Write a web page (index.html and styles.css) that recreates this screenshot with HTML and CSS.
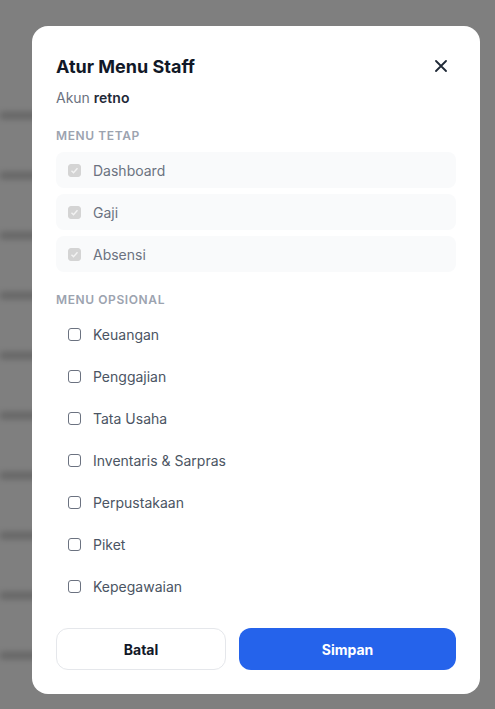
FILE: index.html
```html
<!DOCTYPE html>
<html lang="id">
<head>
    <meta charset="UTF-8">
    <meta name="viewport" content="width=device-width, initial-scale=1.0">
    <title>Atur Menu Staff</title>
    <link rel="stylesheet" href="styles.css">
</head>
<body>

    <!-- Staff table behind the dialog (blurred) -->
    <div class="page">
        <div class="page-row"><span class="cell"></span></div>
        <div class="page-row"><span class="cell"></span></div>
        <div class="page-row"><span class="cell"></span></div>
        <div class="page-row"><span class="cell"></span></div>
        <div class="page-row"><span class="cell"></span></div>
        <div class="page-row"><span class="cell"></span></div>
        <div class="page-row"><span class="cell"></span></div>
        <div class="page-row"><span class="cell"></span></div>
        <div class="page-row"><span class="cell"></span></div>
        <div class="page-row"><span class="cell"></span></div>
    </div>

    <!-- Dialog -->
    <div class="overlay">
        <div class="modal">
            <div class="modal-header">
                <h2 class="modal-title">Atur Menu Staff</h2>
                <button class="close-btn" aria-label="Tutup">
                    <svg width="12" height="12" viewBox="0 0 12 12" fill="none">
                        <path d="M1 1L11 11M11 1L1 11" stroke="#1f2937" stroke-width="1.8" stroke-linecap="round"/>
                    </svg>
                </button>
            </div>
            <p class="account">Akun <strong>retno</strong></p>

            <div class="section-label">Menu Tetap</div>
            <div class="menu-list">
                <label class="menu-item fixed"><input type="checkbox" checked disabled> Dashboard</label>
                <label class="menu-item fixed"><input type="checkbox" checked disabled> Gaji</label>
                <label class="menu-item fixed"><input type="checkbox" checked disabled> Absensi</label>
            </div>

            <div class="section-label">Menu Opsional</div>
            <div class="menu-list">
                <label class="menu-item"><input type="checkbox"> Keuangan</label>
                <label class="menu-item"><input type="checkbox"> Penggajian</label>
                <label class="menu-item"><input type="checkbox"> Tata Usaha</label>
                <label class="menu-item"><input type="checkbox"> Inventaris &amp; Sarpras</label>
                <label class="menu-item"><input type="checkbox"> Perpustakaan</label>
                <label class="menu-item"><input type="checkbox"> Piket</label>
                <label class="menu-item"><input type="checkbox"> Kepegawaian</label>
            </div>

            <div class="modal-actions">
                <button class="btn btn-cancel">Batal</button>
                <button class="btn btn-save">Simpan</button>
            </div>
        </div>
    </div>

</body>
</html>
```

FILE: styles.css
```css
/* Base */
body {
    margin: 0;
    font-family: 'Inter', 'Noto Sans', sans-serif;
    background: #ffffff;
    overflow: hidden;
    height: 100vh;
}

/* Page behind the dialog */
.page {
    padding-top: 112px;
    filter: blur(3px);
}

.page-row {
    height: 60px;
}

.cell {
    display: block;
    width: 120px;
    height: 7px;
    background: #c8c8c8;
}

/* Dim layer */
.overlay {
    position: fixed;
    inset: 0;
    background: rgba(0, 0, 0, 0.5);
    display: flex;
    align-items: flex-start;
    padding: 26px 15px 0 32px;
}

.modal {
    width: 448px;
    box-sizing: border-box;
    background: #ffffff;
    border-radius: 16px;
    padding: 24px;
}

.modal-header {
    display: flex;
    align-items: center;
    justify-content: space-between;
    height: 32px;
}

.modal-title {
    margin: 0;
    font-size: 18px;
    font-weight: 700;
    color: #111827;
}

.close-btn {
    width: 32px;
    height: 32px;
    margin-right: -1px;
    border: none;
    background: none;
    display: flex;
    align-items: center;
    justify-content: center;
    padding: 0;
    cursor: pointer;
}

.account {
    margin: 6px 0 0;
    font-size: 14px;
    line-height: 20px;
    color: #6b7280;
}

.account strong {
    font-weight: 600;
    color: #1f2937;
}

.section-label {
    margin-top: 20px;
    font-size: 12px;
    line-height: 16px;
    font-weight: 600;
    letter-spacing: 0.05em;
    text-transform: uppercase;
    color: #9ca3af;
}

.menu-list {
    margin-top: 8px;
    display: flex;
    flex-direction: column;
    gap: 6px;
}

.menu-item {
    display: flex;
    align-items: center;
    gap: 12px;
    height: 36px;
    padding: 0 12px;
    border-radius: 8px;
    font-size: 14px;
    color: #4b5563;
    cursor: pointer;
}

.menu-item.fixed {
    background: #f9fafb;
    color: #6b7280;
    cursor: default;
}

/* Checkboxes */
.menu-item input {
    appearance: none;
    width: 13px;
    height: 13px;
    margin: 0;
    border: 1px solid #6b7280;
    border-radius: 3px;
    background: #ffffff;
    flex-shrink: 0;
}

.menu-item input:checked:disabled {
    border-color: #d4d4d4;
    background: #d4d4d4 url("data:image/svg+xml,%3Csvg xmlns='http://www.w3.org/2000/svg' viewBox='0 0 13 13'%3E%3Cpath d='M3.5 6.8l2 2 4-4.6' fill='none' stroke='%23f3f3f3' stroke-width='1.4'/%3E%3C/svg%3E") no-repeat center / 13px 13px;
}

/* Footer buttons */
.modal-actions {
    margin-top: 24px;
    display: flex;
    gap: 13px;
}

.btn {
    height: 42px;
    border-radius: 12px;
    font-family: inherit;
    font-size: 14px;
    font-weight: 700;
    cursor: pointer;
}

.btn-cancel {
    flex: 0 0 170px;
    background: #ffffff;
    border: 1px solid #e5e7eb;
    color: #111827;
}

.btn-save {
    flex: 1;
    background: #2563eb;
    border: none;
    color: #ffffff;
}
```
